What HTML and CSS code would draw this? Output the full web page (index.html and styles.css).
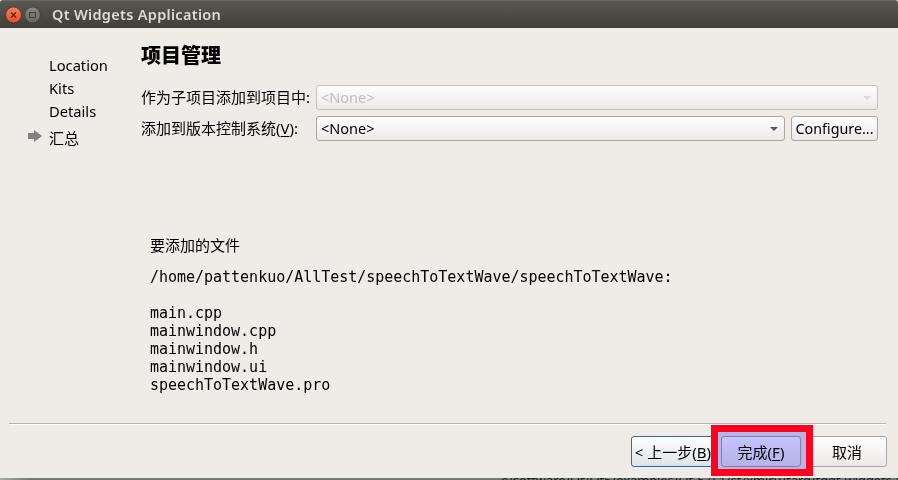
FILE: index.html
```html
<!DOCTYPE html>
<html lang="zh-CN">
<head>
<meta charset="utf-8">
<title>Qt Widgets Application</title>
<link rel="stylesheet" href="styles.css">
</head>
<body>
<div class="window">
  <header class="titlebar">
    <svg class="controls" width="36" height="18" viewBox="0 0 36 18">
      <defs><linearGradient id="c" x2="0" y2="1"><stop stop-color="#f58158"/><stop offset="1" stop-color="#e9501f"/></linearGradient><linearGradient id="m" x2="0" y2="1"><stop stop-color="#888780"/><stop offset="1" stop-color="#686761"/></linearGradient></defs>
      <circle cx="8.5" cy="9" r="7.9" fill="url(#c)" stroke="#393732" stroke-width=".7"/>
      <path d="M6 6.5l5 5m0-5l-5 5" stroke="#4b281b" stroke-width="1.2"/>
      <circle cx="27.5" cy="9" r="7.9" fill="url(#m)" stroke="#393732" stroke-width=".7"/>
      <path d="M24.5 6.5h6v5h-6z" fill="none" stroke="#3c3b37"/>
    </svg>
    <span class="title">Qt Widgets Application</span>
  </header>
  <main class="body">
    <nav class="steps">
      <div class="step">Location</div>
      <div class="step">Kits</div>
      <div class="step">Details</div>
      <div class="step current"><svg width="14" height="12" viewBox="0 0 14 12"><path d="M0 3h6V0l8 6-8 6V9H0z" fill="#808080"/></svg>汇总</div>
    </nav>
    <section class="page">
      <h1>项目管理</h1>
      <div class="field"><label>作为子项目添加到项目中:</label><div class="combo disabled"><span>&lt;None&gt;</span><i></i></div></div>
      <div class="field"><label>添加到版本控制系统(<u>V</u>):</label><div class="combo"><span>&lt;None&gt;</span><i></i></div><button class="configure">Configure...</button></div>
      <div class="files">
        <p>要添加的文件</p>
<pre>/home/pattenkuo/AllTest/speechToTextWave/speechToTextWave:

main.cpp
mainwindow.cpp
mainwindow.h
mainwindow.ui
speechToTextWave.pro</pre>
      </div>
    </section>
  </main>
  <footer class="footer">
    <button class="back">&lt; 上一步(<u>B</u>)</button>
    <button class="finish">完成(<u>F</u>)</button>
    <button class="cancel">取消</button>
    <div class="tint"></div>
    <div class="highlight"></div>
  </footer>
</div>
<div class="behind"><span>e/software/Qt/Qt5/examples/Qt-5.9.1/st/xmlru/tarq/tqqt-widgets-l</span></div>
</body>
</html>
```
FILE: styles.css
```css
* { box-sizing: border-box; }
body { margin: 0; width: 898px; height: 480px; overflow: hidden; background: #777; color: #000; font: 15px/20px "Noto Sans", "Noto Sans CJK SC", sans-serif; }
.window { height: 478px; background: #efebe7; display: flex; flex-direction: column; }
.titlebar { height: 28px; flex: none; display: flex; align-items: center; padding-left: 5px; background: linear-gradient(#59574f, #403e39); border-top: 1px solid #6b6961; border-radius: 3px 3px 0 0; }
.controls { display: block; flex: none; }
.title { margin: -2px 0 0 11px; font-weight: 600; font-size: 14.5px; letter-spacing: .3px; color: #dfdbd2; white-space: nowrap; }
.body { height: 395px; flex: none; display: flex; }
.steps { width: 141px; padding: 25px 0 0 49px; font-size: 14.7px; }
.step { height: 23px; display: flex; align-items: center; line-height: 20px; white-space: nowrap; }
.current { height: 32px; margin-left: -21px; gap: 7px; font-size: 15px; }
.current svg { position: relative; top: -2px; }
.page { width: 737px; }
h1 { margin: 13px 0 16px; font: 900 20px/28px "Noto Sans CJK SC", sans-serif; }
.field { height: 25px; display: flex; align-items: center; margin-bottom: 6px; }
label { width: 175px; white-space: nowrap; padding-bottom: 1px; }
u { text-decoration-thickness: 1px; text-underline-offset: 2px; }
.combo { flex: 1; height: 25px; border: 1px solid #aaa7a4; border-radius: 3px; background: linear-gradient(#fefefe, #eceae8); display: flex; align-items: center; justify-content: space-between; padding: 0 6px 0 4px; font-size: 14.5px; }
.combo span { margin-top: -2px; }
.combo i { border: 4px solid transparent; border-top-color: #555; border-bottom: 0; }
.disabled { color: #bebebe; border-color: #c5c1bd; }
.disabled i { border-top-color: #deddda; }
button { font: inherit; color: #000; padding: 0; border: 1px solid #aaa7a4; border-radius: 3px; background: linear-gradient(#fefefe, #eceae8); white-space: nowrap; }
.configure { width: 87px; height: 25px; margin-left: 6px; font-size: 14.3px; }
.files { padding: 88px 0 0 9px; }
.files p { margin: 0 0 13px; line-height: 20px; }
pre { margin: 0; font: 15px/18px "DejaVu Sans Mono", monospace; letter-spacing: -.02px; }
.footer { position: relative; height: 55px; margin: 0 12px 0 9px; border-top: 1px solid #b4b2ae; box-shadow: inset 0 1px #fff; display: flex; justify-content: flex-end; padding-top: 12px; }
.footer button { height: 31px; }
.back { width: 84px; border-color: #2d6e9e; background: linear-gradient(#fff, #dce3e8); }
.finish { width: 80px; margin: 0 6px; }
.cancel { width: 80px; margin-right: -1px; }
.tint, .highlight { position: absolute; left: 702px; top: 1px; width: 102px; height: 51px; }
.tint { background: #c4c4ff; mix-blend-mode: multiply; }
.highlight { border: 7px solid #ff001e; }
.behind { height: 2px; overflow: hidden; background: linear-gradient(90deg, #aaa, #777 30px, #777); }
.behind span { display: block; margin: -7px 0 0 501px; font-size: 13px; line-height: 18px; letter-spacing: -.1px; white-space: nowrap; color: #222; }
```
